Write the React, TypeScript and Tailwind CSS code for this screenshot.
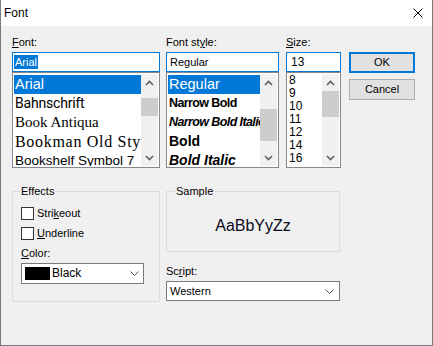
const Chevron = ({ down = false }: { down?: boolean }) => (
  <svg width="9" height="6" viewBox="0 0 9 6">
    <polyline
      points={down ? "1,1 4.5,4.5 8,1" : "1,5 4.5,1.5 8,5"}
      fill="none"
      stroke="#606060"
      strokeWidth="1.6"
    />
  </svg>
);

const ComboArrow = () => (
  <svg width="9" height="5" viewBox="0 0 9 5">
    <polyline points="0.5,0.5 4.5,4.5 8.5,0.5" fill="none" stroke="#505050" strokeWidth="1" />
  </svg>
);

const ScrollBar = ({ thumb }: { thumb: string }) => (
  <div className="w-[17px] flex flex-col bg-[#f0f0f0]">
    <div className="h-[17px] flex items-center justify-center">
      <Chevron />
    </div>
    <div className="flex-1">
      <div className={`bg-[#cdcdcd] ${thumb}`} />
    </div>
    <div className="h-[17px] flex items-center justify-center">
      <Chevron down />
    </div>
  </div>
);

const Label = ({ children }: { children: React.ReactNode }) => (
  <div className="h-[13px] mb-[3px] leading-[13px] whitespace-nowrap">{children}</div>
);

const Edit = ({ children }: { children: React.ReactNode }) => (
  <div className="h-[20px] border border-[#0078d7] bg-white flex items-center pl-[1px] overflow-hidden whitespace-nowrap">
    {children}
  </div>
);

const List = ({ children, thumb }: { children: React.ReactNode; thumb: string }) => (
  <div className="h-[96px] border border-[#828790] bg-white p-[1px] flex">
    <div className="flex-1 min-w-0 overflow-hidden">{children}</div>
    <ScrollBar thumb={thumb} />
  </div>
);

const Item = ({ children, className, selected = false }: { children: React.ReactNode; className: string; selected?: boolean }) => (
  <div
    className={`h-[19px] flex items-center pl-[1px] whitespace-nowrap overflow-hidden ${
      selected ? "bg-[#0078d7] text-white" : "text-black"
    } ${className}`}
  >
    {children}
  </div>
);

const Checkbox = ({ children }: { children: React.ReactNode }) => (
  <div className="flex items-center h-[13px]">
    <span className="w-[13px] h-[13px] border border-[#333333] bg-white" />
    <span className="ml-[3px] leading-[13px]">{children}</span>
  </div>
);

export default function App() {
  const sizes = ["8", "9", "10", "11", "12", "14", "16"];

  return (
    <div className="w-[433px] h-[346px] overflow-hidden bg-[#f0f0f0] border-x border-b border-[#7a7a7a] flex flex-col font-['Liberation_Sans',sans-serif] text-[11px] leading-[13px] text-black">
      {/* title bar */}
      <div className="h-[26px] shrink-0 bg-white flex items-center justify-between pl-[3px] pr-[9px]">
        <span className="text-[12px]">Font</span>
        <svg width="10" height="10" viewBox="0 0 10 10">
          <path d="M0.5 0.5 L9.5 9.5 M9.5 0.5 L0.5 9.5" stroke="#000" strokeWidth="1" />
        </svg>
      </div>

      <div className="flex-1 pl-[11px] pt-[10px]">
        {/* pickers */}
        <div className="flex">
          <div className="w-[148px]">
            <Label>
              <span className="underline">F</span>ont:
            </Label>
            <Edit>
              <span className="bg-[#0078d7] text-white px-[1px] leading-[14px]">Arial</span>
            </Edit>
            <List thumb="mt-[7px] h-[18px]">
              <div className="pt-[1px]">
                <Item selected className="font-['Liberation_Sans'] text-[14.5px]">Arial</Item>
                <Item className="font-['Roboto'] text-[14px] tracking-[-0.2px]">Bahnschrift</Item>
                <Item className="font-['Liberation_Serif'] text-[15px]">Book Antiqua</Item>
                <Item className="font-['Liberation_Serif'] text-[16px] tracking-[0.7px]">Bookman Old Style</Item>
                <Item className="font-['Liberation_Sans'] text-[13.5px]">Bookshelf Symbol 7</Item>
              </div>
            </List>
          </div>

          <div className="ml-[6px] w-[113px]">
            <Label>
              Font st<span className="underline">y</span>le:
            </Label>
            <Edit>
              <span className="pl-[2px]">Regular</span>
            </Edit>
            <List thumb="mt-[18px] h-[32px]">
              <div className="pt-[1px]">
                <Item selected className="text-[14.5px]">Regular</Item>
                <Item className="font-bold text-[12.5px] tracking-[-0.6px]">Narrow Bold</Item>
                <Item className="font-bold italic text-[12.5px] tracking-[-0.6px]">Narrow Bold Italic</Item>
                <Item className="font-bold text-[14px]">Bold</Item>
                <Item className="font-bold italic text-[14px]">Bold Italic</Item>
              </div>
            </List>
          </div>

          <div className="ml-[7px] w-[55px]">
            <Label>
              <span className="underline">S</span>ize:
            </Label>
            <Edit>
              <span className="pl-[3px] text-[12px]">13</span>
            </Edit>
            <List thumb="mt-0 h-[26px]">
              {sizes.map((s) => (
                <div key={s} className="h-[13px] leading-[13px] pl-[1px] text-[12px]">
                  {s}
                </div>
              ))}
            </List>
          </div>

          <div className="ml-[8px] w-[66px] pt-[16px] flex flex-col gap-[6px]">
            <button className="h-[21px] border-2 border-[#0078d7] bg-[#e1e1e1] text-[11px]">OK</button>
            <button className="h-[21px] border border-[#adadad] bg-[#e1e1e1] text-[11px]">Cancel</button>
          </div>
        </div>

        {/* effects + sample */}
        <div className="flex mt-[17px]">
          <fieldset className="w-[148px] h-[117px] border border-[#dcdcdc] pl-[8px]">
            <legend className="px-[1px] -ml-[1px] leading-[13px]">Effects</legend>
            <div className="mt-[9px]">
              <Checkbox>
                Stri<span className="underline">k</span>eout
              </Checkbox>
            </div>
            <div className="mt-[7px]">
              <Checkbox>
                <span className="underline">U</span>nderline
              </Checkbox>
            </div>
            <div className="mt-[7px] h-[13px] leading-[13px]">
              <span className="underline">C</span>olor:
            </div>
            <div className="mt-[3px] w-[123px] h-[21px] border border-[#7a7a7a] bg-white flex items-center pl-[3px] pr-[4px]">
              <span className="w-[25px] h-[13px] bg-black" />
              <span className="ml-[2px] flex-1 text-[12px]">Black</span>
              <ComboArrow />
            </div>
          </fieldset>

          <div className="ml-[6px] w-[174px]">
            <fieldset className="h-[67px] border border-[#dcdcdc] px-[8px]">
              <legend className="px-[1px] leading-[13px]">Sample</legend>
              <div className="h-[53px] pt-[3px] flex items-center justify-center text-[16px] leading-[16px] text-[#0a0a1a]">
                AaBbYyZz
              </div>
            </fieldset>
            <div className="mt-[13px] h-[13px] leading-[13px]">
              Sc<span className="underline">r</span>ipt:
            </div>
            <div className="mt-[3px] h-[20px] border border-[#7a7a7a] bg-white flex items-center pl-[3px] pr-[5px]">
              <span className="flex-1">Western</span>
              <ComboArrow />
            </div>
          </div>
        </div>
      </div>
    </div>
  );
}
